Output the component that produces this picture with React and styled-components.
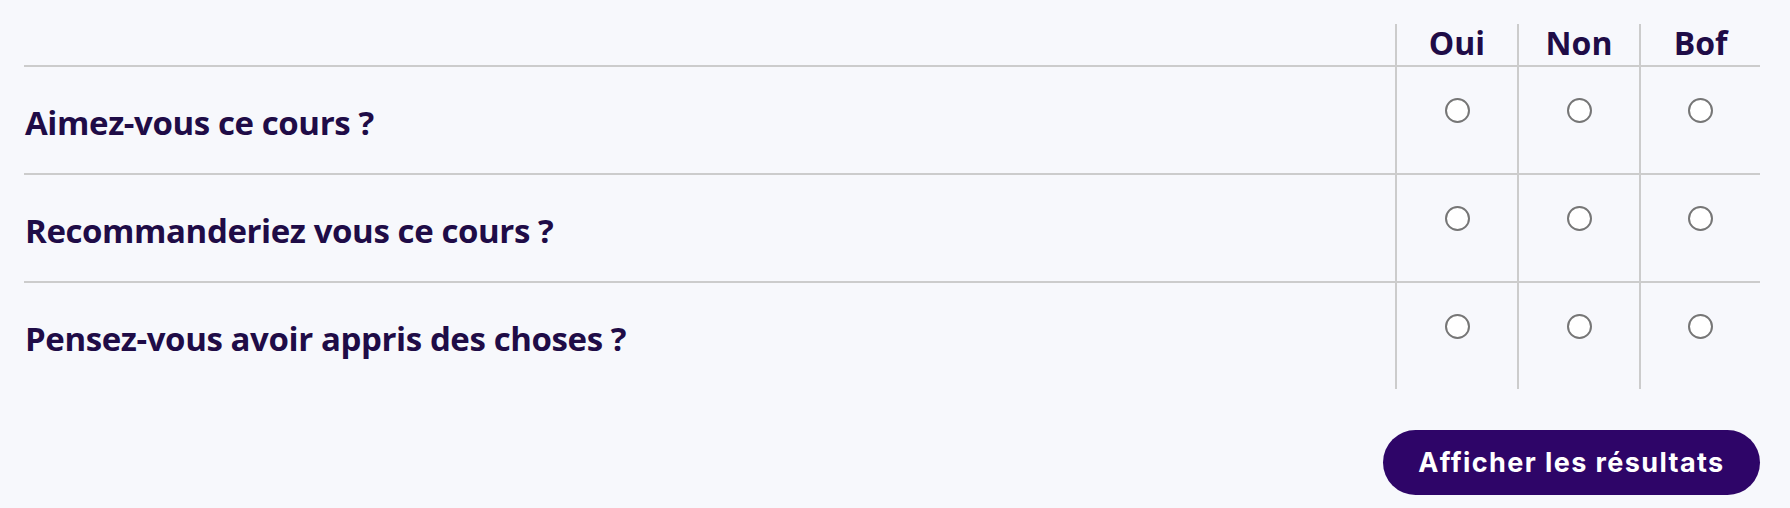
import React from 'react';
import styled, { createGlobalStyle } from 'styled-components';

const GlobalStyle = createGlobalStyle`
  body {
    margin: 0;
    background-color: #f7f8fc;
    font-family: 'Open Sans', 'Noto Sans', sans-serif;
  }
`;

const Page = styled.div`
  padding: 24px 30px 0 24px;
  display: flex;
  flex-direction: column;
  align-items: stretch;
`;

const Grid = styled.div`
  display: grid;
  grid-template-columns: 1fr 122px 122px 121px;
`;

const HeadCell = styled.div`
  height: 43px;
  box-sizing: border-box;
  border-bottom: 2px solid #cccccc;
  border-left: ${({ $option }) => ($option ? '2px solid #cccccc' : 'none')};
  display: flex;
  align-items: flex-end;
  justify-content: center;
  padding-bottom: 6px;
  font-size: 32px;
  font-weight: 700;
  color: #1f0c47;
  line-height: 1;
`;

const QuestionCell = styled.div`
  height: ${({ $last }) => ($last ? '106px' : '108px')};
  box-sizing: border-box;
  border-bottom: ${({ $last }) => ($last ? 'none' : '2px solid #cccccc')};
  display: flex;
  align-items: center;
  padding-top: 4px;
  padding-left: 1px;
  font-size: 33px;
  font-weight: 700;
  color: #1f0c47;
  letter-spacing: -0.4px;
`;

const OptionCell = styled.label`
  height: ${({ $last }) => ($last ? '106px' : '108px')};
  box-sizing: border-box;
  border-bottom: ${({ $last }) => ($last ? 'none' : '2px solid #cccccc')};
  border-left: 2px solid #cccccc;
  display: flex;
  justify-content: center;
  align-items: flex-start;
  padding-top: 31px;
`;

const Radio = styled.input`
  appearance: none;
  margin: 0;
  width: 25px;
  height: 25px;
  border-radius: 50%;
  border: 2px solid #767676;
  background: #ffffff;
  box-sizing: border-box;
  cursor: pointer;

  &:checked {
    border-color: #2e0568;
    box-shadow: inset 0 0 0 4px #ffffff;
    background: #2e0568;
  }
`;

const Footer = styled.div`
  display: flex;
  justify-content: flex-end;
  padding-top: 41px;
`;

const Button = styled.button`
  width: 377px;
  height: 65px;
  border: none;
  border-radius: 33px;
  background-color: #2e0568;
  color: #ffffff;
  font-family: 'Inter', 'Noto Sans', sans-serif;
  font-size: 27px;
  font-weight: 700;
  letter-spacing: 1.4px;
  cursor: pointer;
`;

const questions = [
  'Aimez-vous ce cours ?',
  'Recommanderiez vous ce cours ?',
  'Pensez-vous avoir appris des choses ?',
];

const options = ['Oui', 'Non', 'Bof'];

export default function App() {
  return (
    <>
      <GlobalStyle />
      <Page>
        <Grid>
          <HeadCell />
          {options.map((o) => (
            <HeadCell key={o} $option>
              {o}
            </HeadCell>
          ))}
          {questions.map((q, i) => {
            const last = i === questions.length - 1;
            return (
              <React.Fragment key={q}>
                <QuestionCell $last={last}>{q}</QuestionCell>
                {options.map((o) => (
                  <OptionCell key={o} $last={last}>
                    <Radio type="radio" name={`q${i}`} value={o} />
                  </OptionCell>
                ))}
              </React.Fragment>
            );
          })}
        </Grid>
        <Footer>
          <Button>Afficher les résultats</Button>
        </Footer>
      </Page>
    </>
  );
}
